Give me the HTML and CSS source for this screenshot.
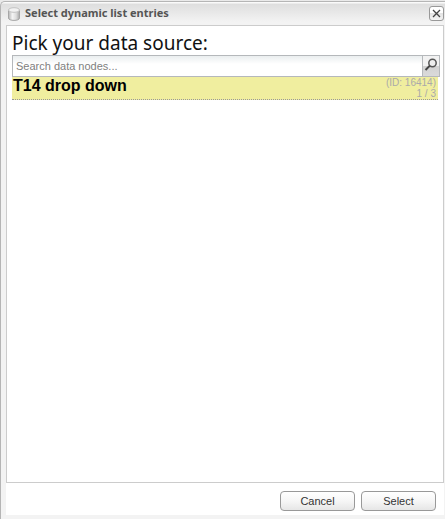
FILE: index.html
```
<!DOCTYPE html>
<html lang="en">
<head>
    <meta charset="UTF-8">
    <title>Select dynamic list entries</title>
    <link rel="stylesheet" href="styles.css">
</head>
<body>
    <div class="dialog">
        <div class="dialog-header">
            <svg class="dialog-icon" width="14" height="14" viewBox="0 0 14 14">
                <defs>
                    <linearGradient id="cylinder">
                        <stop offset="0" stop-color="#b4b4b4"/>
                        <stop offset="0.35" stop-color="#f4f4f4"/>
                        <stop offset="0.7" stop-color="#dcdcdc"/>
                        <stop offset="1" stop-color="#a8a8a8"/>
                    </linearGradient>
                </defs>
                <path d="M1.5 3v8c0 3.2 11 3.2 11 0V3z" fill="url(#cylinder)" stroke="#a6a6a6"/>
                <ellipse cx="7" cy="3" rx="5.5" ry="2.3" fill="#f2f2f2" stroke="#c2c2c2"/>
            </svg>
            <span class="dialog-title">Select dynamic list entries</span>
            <button type="button" class="close-button" aria-label="Close">
                <svg width="13" height="13" viewBox="0 0 13 13">
                    <path d="M3 3l7 7M10 3l-7 7" stroke="#444" stroke-width="1.3"/>
                </svg>
            </button>
        </div>

        <div class="dialog-body">
            <div class="panel">
                <label class="panel-title" for="search">Pick your data source:</label>
                <div class="search-row">
                    <input type="text" id="search" class="search-input" placeholder="Search data nodes...">
                    <button type="button" class="search-button" aria-label="Search">
                        <svg width="16" height="20" viewBox="0 0 16 20">
                            <circle cx="9.5" cy="7" r="3.7" fill="#eee" stroke="#555" stroke-width="1.5"/>
                            <path d="M6.9 9.6L2.5 14" stroke="#444" stroke-width="2"/>
                        </svg>
                    </button>
                </div>
                <div class="node">
                    <span class="node-name">T14 drop down</span>
                    <span class="node-info">(ID: 16414)<br>1 / 3</span>
                </div>
            </div>

            <div class="actions">
                <button type="button" class="action">Cancel</button>
                <button type="button" class="action">Select</button>
            </div>
        </div>
    </div>
</body>
</html>
```
FILE: styles.css
```
* {
    box-sizing: border-box;
}

body {
    display: flex;
    min-height: 100vh;
    margin: 0;
    padding-top: 1px;
    background: #eaeaea;
    font-family: "Liberation Sans", Arial, sans-serif;
    font-size: 11px;
}

.dialog {
    display: flex;
    flex-direction: column;
    flex: 1;
    padding: 0 1px 4px 5px;
    border-top: 1px solid #b5b5b5;
    border-left: 1px solid #b5b5b5;
    border-top-left-radius: 5px;
    background: #f3f3f3 linear-gradient(#fafafa 0, #fafafa 1px, #dedede 2px, #f3f3f3 20px) no-repeat;
}

.dialog-header {
    display: flex;
    align-items: center;
    height: 23px;
    padding-left: 1px;
}

.dialog-icon {
    margin-right: 4px;
}

.dialog-title {
    flex: 1;
    font-family: Tahoma, "Noto Sans", sans-serif;
    font-size: 11px;
    line-height: 21px;
    height: 23px;
    font-weight: bold;
    color: #555;
}

.close-button {
    display: flex;
    width: 15px;
    height: 15px;
    padding: 0;
    border: 1px solid #999;
    border-radius: 3px;
    background: linear-gradient(#fff 50%, #e4e4e4 50%, #f4f4f4);
}

.dialog-body {
    display: flex;
    flex-direction: column;
    flex: 1;
    background: #fff;
}

.panel {
    flex: 1;
    padding: 5px 3px 0 5px;
    border: 1px solid #ccc;
}

.panel-title {
    display: block;
    font-family: Tahoma, "Noto Sans", sans-serif;
    font-size: 19px;
    line-height: 24px;
    color: #111;
}

.search-row {
    display: flex;
    height: 22px;
    border: 1px solid #b5b8bb;
}

.search-input {
    flex: 1;
    min-width: 0;
    padding: 0 3px;
    border: 0;
    background: linear-gradient(#eaeeef, #fff 8px);
    font-family: inherit;
    font-size: 11px;
}

.search-input::placeholder {
    color: #808080;
}

.search-button {
    width: 17px;
    padding: 0;
    border: 0;
    border-left: 1px solid #b5b8bb;
    background: linear-gradient(#f2f2f2 50%, #d2d2d2 50%, #dadada);
}

.search-button svg {
    display: block;
}

.node {
    display: flex;
    justify-content: space-between;
    height: 23px;
    margin-right: 2px;
    padding: 0 2px 0 1px;
    border-bottom: 1px dotted #999;
    background: #f0ee9f;
}

.node-name {
    font-size: 16px;
    line-height: 18px;
    font-weight: bold;
    color: #000;
}

.node-info {
    font-size: 10px;
    line-height: 11px;
    text-align: right;
    color: #aaa;
}

.actions {
    display: flex;
    justify-content: flex-end;
    gap: 6px;
    padding: 8px 8px 4px;
}

.action {
    width: 75px;
    height: 20px;
    padding: 0;
    border: 1px solid #999;
    border-radius: 4px;
    background: linear-gradient(#fff, #f6f6f6 50%, #e6e6e6);
    font-family: inherit;
    font-size: 11px;
    color: #333;
}
```
